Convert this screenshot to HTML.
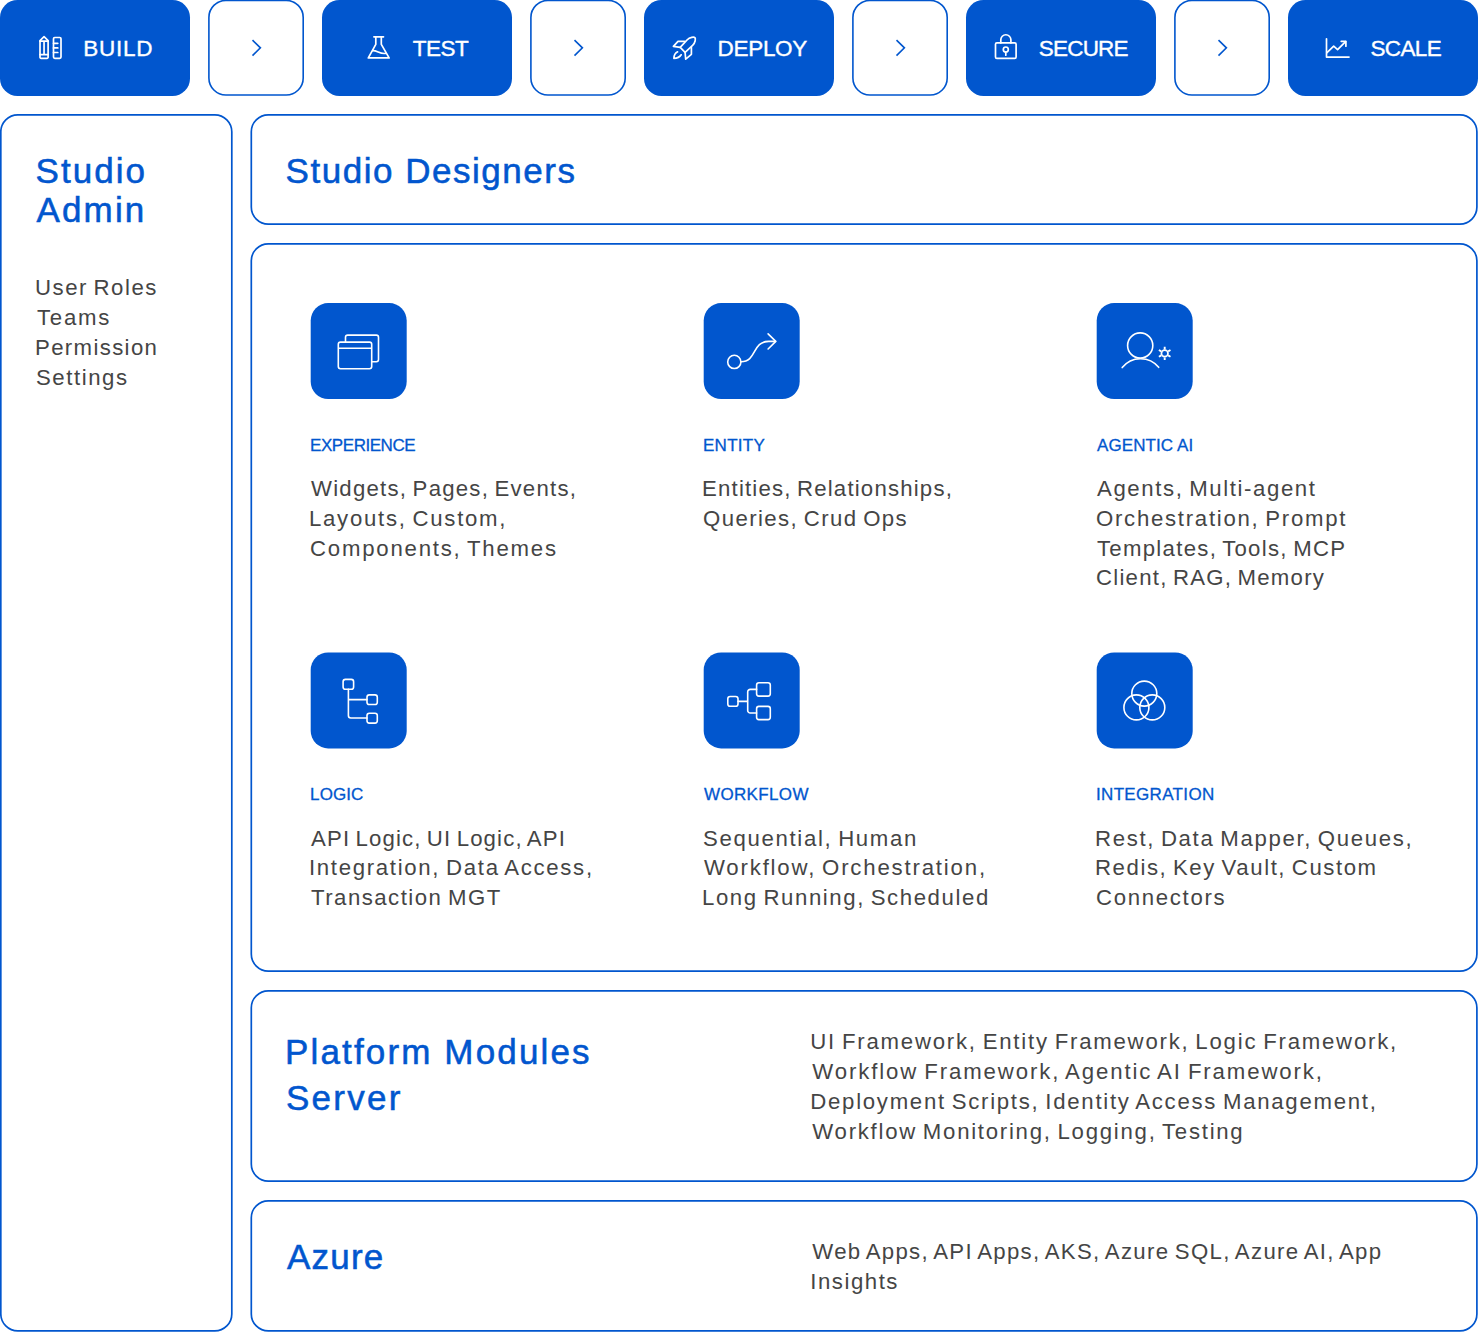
<!DOCTYPE html>
<html lang="en"><head><meta charset="utf-8"><title>Platform Architecture</title>
<style>
html,body{margin:0;padding:0;background:#fff}
body{width:1478px;height:1332px;position:relative;overflow:hidden;font-family:"Liberation Sans", sans-serif}
svg.bg{position:absolute;left:0;top:0}
.t{position:absolute;white-space:nowrap;line-height:1;margin:0}
.nv{font-size:22.5px;color:#fff;-webkit-text-stroke:0.35px #fff}
.hd{font-size:35px;color:#0156ce;-webkit-text-stroke:0.55px #0156ce}
.lb{font-size:17px;color:#0156ce;-webkit-text-stroke:0.3px #0156ce}
.bd{font-size:22.2px;color:#454545;word-spacing:-2px}
</style></head>
<body>
<svg class="bg" width="1478" height="1332" viewBox="0 0 1478 1332" fill="none">
<rect x="0" y="0" width="190" height="96" rx="17.5" fill="#0156ce"/>
<rect x="322" y="0" width="190" height="96" rx="17.5" fill="#0156ce"/>
<rect x="644" y="0" width="190" height="96" rx="17.5" fill="#0156ce"/>
<rect x="966" y="0" width="190" height="96" rx="17.5" fill="#0156ce"/>
<rect x="1288" y="0" width="190" height="96" rx="17.5" fill="#0156ce"/>
<rect x="208.9" y="0.4" width="94.3" height="94.6" rx="17" stroke="#0156ce" stroke-width="1.6"/>
<path d="M252.5 40.2 L260.4 47.8 L252.5 55.6" stroke="#0156ce" stroke-width="1.6" stroke-linecap="butt" stroke-linejoin="miter"/>
<rect x="530.9" y="0.4" width="94.3" height="94.6" rx="17" stroke="#0156ce" stroke-width="1.6"/>
<path d="M574.5 40.2 L582.4 47.8 L574.5 55.6" stroke="#0156ce" stroke-width="1.6" stroke-linecap="butt" stroke-linejoin="miter"/>
<rect x="852.9" y="0.4" width="94.3" height="94.6" rx="17" stroke="#0156ce" stroke-width="1.6"/>
<path d="M896.5 40.2 L904.4 47.8 L896.5 55.6" stroke="#0156ce" stroke-width="1.6" stroke-linecap="butt" stroke-linejoin="miter"/>
<rect x="1174.9" y="0.4" width="94.3" height="94.6" rx="17" stroke="#0156ce" stroke-width="1.6"/>
<path d="M1218.5 40.2 L1226.4 47.8 L1218.5 55.6" stroke="#0156ce" stroke-width="1.6" stroke-linecap="butt" stroke-linejoin="miter"/>
<rect x="0.8" y="114.8" width="231.00" height="1216.10" rx="17" stroke="#0156ce" stroke-width="1.7"/>
<rect x="251.3" y="114.8" width="1225.60" height="109.25" rx="17" stroke="#0156ce" stroke-width="1.7"/>
<rect x="251.3" y="243.8" width="1225.60" height="727.30" rx="17" stroke="#0156ce" stroke-width="1.7"/>
<rect x="251.3" y="990.8" width="1225.60" height="190.30" rx="17" stroke="#0156ce" stroke-width="1.7"/>
<rect x="251.3" y="1200.8" width="1225.60" height="130.10" rx="17" stroke="#0156ce" stroke-width="1.7"/>
<rect x="310.7" y="303.1" width="96" height="96" rx="17.5" fill="#0156ce"/>
<rect x="703.7" y="303.1" width="96" height="96" rx="17.5" fill="#0156ce"/>
<rect x="1096.7" y="303.1" width="96" height="96" rx="17.5" fill="#0156ce"/>
<rect x="310.7" y="652.4" width="96" height="96" rx="17.5" fill="#0156ce"/>
<rect x="703.7" y="652.4" width="96" height="96" rx="17.5" fill="#0156ce"/>
<rect x="1096.7" y="652.4" width="96" height="96" rx="17.5" fill="#0156ce"/>
<g transform="translate(310.7 303.1)" stroke="#fff" stroke-width="1.6" stroke-linecap="round" stroke-linejoin="round"><rect x="27.6" y="39" width="33.4" height="26.7" rx="2.2"/><path d="M28.2 45.1H60.4" stroke-linecap="butt"/><path d="M34.8 39V34.2a2.2 2.2 0 0 1 2.2-2.2H65.6a2.2 2.2 0 0 1 2.2 2.2V56.4a2.2 2.2 0 0 1-2.2 2.2H61"/></g>
<g transform="translate(703.7 303.1)" stroke="#fff" stroke-width="1.6" stroke-linecap="round" stroke-linejoin="round"><circle cx="30.6" cy="58.8" r="6.6"/><path d="M37.3 58.6C53.5 58.6 48 38.3 65 38.3H71.8"/><path d="M64.4 30.8L72.1 38.3L64.4 45.9"/></g>
<g transform="translate(1096.7 303.1)" stroke="#fff" stroke-width="1.6" stroke-linecap="round" stroke-linejoin="round"><circle cx="43.5" cy="42.4" r="12.6"/><path d="M25.5 64.5A23.5 23.5 0 0 1 62 64.2"/><circle cx="68" cy="50.3" r="3.3" stroke-width="1.7"/><path d="M68.00 46.30L68.00 43.60M64.54 48.30L62.20 46.95M64.54 52.30L62.20 53.65M68.00 54.30L68.00 57.00M71.46 52.30L73.80 53.65M71.46 48.30L73.80 46.95" stroke-width="1.9" stroke-linecap="butt"/></g>
<g transform="translate(310.7 652.4)" stroke="#fff" stroke-width="1.6" stroke-linecap="round" stroke-linejoin="round"><rect x="32.4" y="27" width="10.5" height="9.8" rx="2.3"/><rect x="56.3" y="42.5" width="10.3" height="9.6" rx="2.3"/><rect x="56.3" y="60.9" width="10.3" height="9.8" rx="2.3"/><path d="M37.7 36.8V63.2a2.4 2.4 0 0 0 2.4 2.4H56.3M37.7 47.2H56.3"/></g>
<g transform="translate(703.7 652.4)" stroke="#fff" stroke-width="1.6" stroke-linecap="round" stroke-linejoin="round"><rect x="24.1" y="44.1" width="10.2" height="9.8" rx="2.3"/><rect x="52.9" y="30.3" width="13.7" height="13.4" rx="2.3"/><rect x="52.9" y="54" width="13.7" height="13.2" rx="2.3"/><path d="M34.3 49H44M52.9 37H46.6A2.6 2.6 0 0 0 44 39.6V58A2.6 2.6 0 0 0 46.6 60.6H52.9"/></g>
<g transform="translate(1096.7 652.4)" stroke="#fff" stroke-width="1.6" stroke-linecap="round" stroke-linejoin="round"><circle cx="47.6" cy="41.2" r="12.5"/><circle cx="39.7" cy="55" r="12.5"/><circle cx="55.6" cy="55" r="12.5"/></g>
<g stroke="#fff" stroke-width="1.7" stroke-linecap="round" stroke-linejoin="round"><path d="M40 40.6L44.05 36.7L48.1 40.6V57.2a1.1 1.1 0 0 1-1.1 1.1H41.1a1.1 1.1 0 0 1-1.1-1.1Z"/><path d="M40 41.2H48.1M44.05 41.2V54.5M40 54.6H48.1"/><rect x="53.5" y="37.5" width="7.5" height="20.8" rx="1.3"/><path d="M53.5 43.3H57.8M53.5 47.9H57.8M53.5 52.5H57.8"/></g>
<g stroke="#fff" stroke-width="1.7" stroke-linecap="round" stroke-linejoin="round"><path d="M373.9 36.8H383.5M375.8 36.8V44.3L368.3 57.9H389.1L381.3 44.3V36.8"/><path d="M372.9 50.6C377.5 50.6 380 54.3 385.6 53.4"/></g>
<g stroke="#fff" stroke-width="1.7" stroke-linecap="round" stroke-linejoin="round"><path d="M680.2 47.4L685.1 52.4L692.6 45.4C695.6 42.4 695.7 38.6 694.9 37.6C693.9 36.8 690 37 687 40Z"/><path d="M684.6 41.3H678L673.4 46.3L680.2 47.4"/><path d="M691.4 47.3V54.3L685.7 59.2L685.1 52.4"/><path d="M677.6 51.8C674.6 53.4 673.9 56.5 673.9 58.3C676.2 58.3 679.6 57.4 681.2 54.8"/></g>
<g stroke="#fff" stroke-width="1.7" stroke-linecap="round" stroke-linejoin="round"><rect x="995.5" y="42.9" width="20.6" height="15.4" rx="1.4"/><path d="M1000.8 42.9V39.8a5.05 5.05 0 0 1 10.1 0V42.9"/><circle cx="1005.8" cy="49.5" r="2.5"/><path d="M1005.8 52V55.2"/></g>
<g stroke="#fff" stroke-width="1.7" stroke-linecap="round" stroke-linejoin="round"><path d="M1326.5 38.8V57.1H1349"/><path d="M1327 52.6L1333.7 46.2L1337.6 49.6L1345.6 41.6"/><path d="M1341.2 41.3H1345.9V46.2"/></g>
</svg>
<div class="t nv" style="left:83.3px;top:38.45px;letter-spacing:0.725px">BUILD</div>
<div class="t nv" style="left:412.7px;top:38.45px;letter-spacing:-0.500px">TEST</div>
<div class="t nv" style="left:717.6px;top:38.45px;letter-spacing:-0.320px">DEPLOY</div>
<div class="t nv" style="left:1038.8px;top:38.45px;letter-spacing:-0.800px">SECURE</div>
<div class="t nv" style="left:1370.4px;top:38.45px;letter-spacing:-0.600px">SCALE</div>
<div class="t hd" style="left:35.5px;top:153.17px;letter-spacing:2.040px">Studio</div>
<div class="t hd" style="left:36.5px;top:191.77px;letter-spacing:2.150px">Admin</div>
<div class="t hd" style="left:285.6px;top:153.07px;letter-spacing:1.520px">Studio Designers</div>
<div class="t hd" style="left:285.0px;top:1033.67px;letter-spacing:2.147px">Platform Modules</div>
<div class="t hd" style="left:286.0px;top:1079.77px;letter-spacing:2.240px">Server</div>
<div class="t hd" style="left:287.0px;top:1239.17px;letter-spacing:1.200px">Azure</div>
<div class="t bd" style="left:35.0px;top:276.61px;letter-spacing:1.511px">User Roles</div>
<div class="t bd" style="left:37.0px;top:306.71px;letter-spacing:1.775px">Teams</div>
<div class="t bd" style="left:35.0px;top:336.71px;letter-spacing:1.356px">Permission</div>
<div class="t bd" style="left:36.0px;top:366.71px;letter-spacing:1.557px">Settings</div>
<div class="t lb" style="left:310.1px;top:436.71px;letter-spacing:-0.456px">EXPERIENCE</div>
<div class="t lb" style="left:703.0px;top:436.71px;letter-spacing:0.280px">ENTITY</div>
<div class="t lb" style="left:1097.0px;top:436.71px;letter-spacing:0.078px">AGENTIC AI</div>
<div class="t lb" style="left:310.1px;top:786.21px;letter-spacing:0.100px">LOGIC</div>
<div class="t lb" style="left:704.0px;top:786.21px;letter-spacing:0.357px">WORKFLOW</div>
<div class="t lb" style="left:1096.0px;top:786.21px;letter-spacing:0.330px">INTEGRATION</div>
<div class="t bd" style="left:311.0px;top:478.01px;letter-spacing:1.236px">Widgets, Pages, Events,</div>
<div class="t bd" style="left:309.0px;top:507.81px;letter-spacing:1.720px">Layouts, Custom,</div>
<div class="t bd" style="left:310.0px;top:537.51px;letter-spacing:1.776px">Components, Themes</div>
<div class="t bd" style="left:702.0px;top:478.01px;letter-spacing:1.191px">Entities, Relationships,</div>
<div class="t bd" style="left:703.0px;top:507.81px;letter-spacing:1.419px">Queries, Crud Ops</div>
<div class="t bd" style="left:1097.0px;top:478.01px;letter-spacing:1.600px">Agents, Multi-agent</div>
<div class="t bd" style="left:1096.0px;top:507.81px;letter-spacing:1.720px">Orchestration, Prompt</div>
<div class="t bd" style="left:1097.0px;top:537.51px;letter-spacing:1.280px">Templates, Tools, MCP</div>
<div class="t bd" style="left:1096.0px;top:567.31px;letter-spacing:1.239px">Client, RAG, Memory</div>
<div class="t bd" style="left:311.0px;top:827.51px;letter-spacing:1.143px">API Logic, UI Logic, API</div>
<div class="t bd" style="left:309.0px;top:857.21px;letter-spacing:1.683px">Integration, Data Access,</div>
<div class="t bd" style="left:311.0px;top:887.01px;letter-spacing:1.479px">Transaction MGT</div>
<div class="t bd" style="left:703.0px;top:827.51px;letter-spacing:1.663px">Sequential, Human</div>
<div class="t bd" style="left:704.0px;top:857.21px;letter-spacing:1.817px">Workflow, Orchestration,</div>
<div class="t bd" style="left:702.0px;top:887.01px;letter-spacing:1.586px">Long Running, Scheduled</div>
<div class="t bd" style="left:1095.0px;top:827.51px;letter-spacing:1.660px">Rest, Data Mapper, Queues,</div>
<div class="t bd" style="left:1095.0px;top:857.21px;letter-spacing:1.561px">Redis, Key Vault, Custom</div>
<div class="t bd" style="left:1096.0px;top:887.01px;letter-spacing:1.678px">Connectors</div>
<div class="t bd" style="left:810.3px;top:1030.61px;letter-spacing:1.766px">UI Framework, Entity Framework, Logic Framework,</div>
<div class="t bd" style="left:812.3px;top:1060.81px;letter-spacing:1.887px">Workflow Framework, Agentic AI Framework,</div>
<div class="t bd" style="left:810.3px;top:1091.11px;letter-spacing:1.717px">Deployment Scripts, Identity Access Management,</div>
<div class="t bd" style="left:812.3px;top:1121.41px;letter-spacing:1.731px">Workflow Monitoring, Logging, Testing</div>
<div class="t bd" style="left:812.3px;top:1241.01px;letter-spacing:1.312px">Web Apps, API Apps, AKS, Azure SQL, Azure AI, App</div>
<div class="t bd" style="left:810.3px;top:1271.31px;letter-spacing:1.529px">Insights</div>
</body></html>
